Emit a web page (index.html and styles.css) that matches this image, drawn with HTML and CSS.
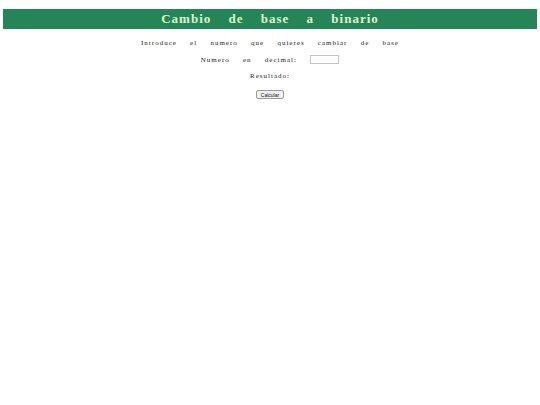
FILE: index.html
```html
<!DOCTYPE html>
<html lang="es">
<head>
<meta charset="utf-8">
<title>Cambio de base a binario</title>
<link rel="stylesheet" href="styles.css">
</head>
<body>
<h1 class="title">Cambio de base a binario</h1>
<main class="content">
  <p class="line">Introduce el numero que quieres cambiar de base</p>
  <p class="line">Numero en decimal: <input class="field" type="text"></p>
  <p class="line">Resultado:</p>
  <p class="line line-btn"><button class="btn" type="button">Calcular</button></p>
</main>
</body>
</html>
```
FILE: styles.css
```css
html, body { margin: 0; padding: 0; background: #ffffff; }
body { padding: 9px 3px 0; font-family: "Liberation Serif", "Times New Roman", serif; }
.title {
  margin: 0;
  height: 20px;
  line-height: 20px;
  background: #248656;
  color: #dff3cf;
  text-align: center;
  font-size: 13px;
  font-weight: bold;
  letter-spacing: 1px;
  word-spacing: 13px;
}
.content { text-align: center; padding-top: 7px; }
.line {
  margin: 0;
  height: 16.5px;
  line-height: 14px;
  font-size: 7px;
  letter-spacing: 1px;
  word-spacing: 10.5px;
  color: #222;
}
.line-btn { padding-top: 2px; }
.field {
  width: 29px;
  height: 9px;
  box-sizing: border-box;
  border: 1px solid #c4c4c4;
  padding: 0;
  margin: 0 0 0 0;
  vertical-align: middle;
}
.btn {
  font-family: "Liberation Sans", Arial, sans-serif;
  font-size: 5px;
  letter-spacing: 0;
  word-spacing: 0;
  width: 28px;
  height: 9px;
  padding: 0;
  border: 1px solid #9a9a9a;
  border-radius: 2px;
  background: #efefef;
  color: #111;
  vertical-align: middle;
}
```
